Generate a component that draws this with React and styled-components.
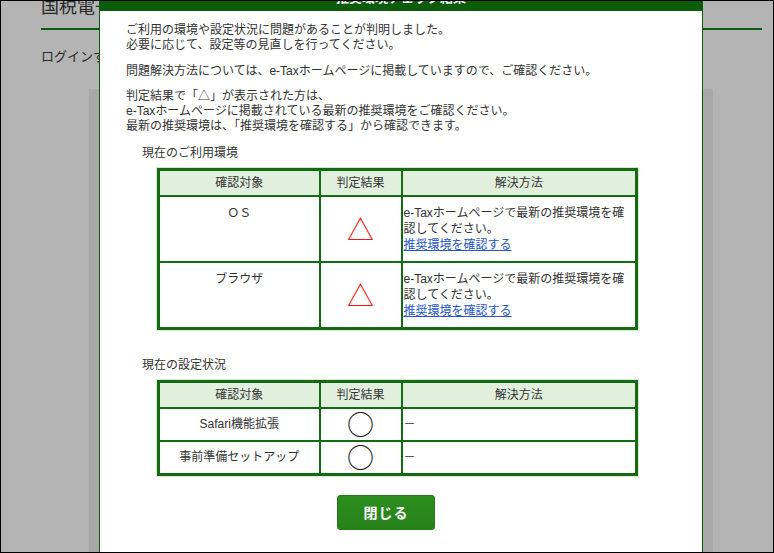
import React from "react";
import styled, { createGlobalStyle } from "styled-components";

const GREEN = "#0b5d0b";
const LINE = "#146b14";

const GlobalStyle = createGlobalStyle`
  body {
    margin: 0;
    font-family: "Liberation Sans", "Noto Sans CJK JP", sans-serif;
    color: #333;
  }
`;

const Frame = styled.div`
  position: relative;
  width: 774px;
  height: 553px;
  box-sizing: border-box;
  border: 1px solid #000;
  overflow: hidden;
  background: #fff;
`;

const Page = styled.div`
  padding-left: 40px;
`;

const SiteTitle = styled.h1`
  margin: -6px 0 0;
  font-size: 18px;
  line-height: 24px;
  font-weight: normal;
  color: #3a3a3a;
  white-space: nowrap;
`;

const TitleRule = styled.div`
  width: 721px;
  height: 2px;
  margin-top: 9px;
  background: #118311;
`;

const LoginText = styled.p`
  margin: 18px 0 0;
  font-size: 13px;
  line-height: 18px;
  color: #3a3a3a;
`;

const ContentBox = styled.div`
  margin: 23px 0 0 48px;
  width: 624px;
  height: 500px;
  background: #efefef;
`;

const Overlay = styled.div`
  position: absolute;
  inset: 0;
  background: rgba(0, 0, 0, 0.294);
`;

const Modal = styled.div`
  position: absolute;
  left: 98px;
  top: -16px;
  width: 604px;
  height: 600px;
  box-sizing: border-box;
  background: #fff;
  border: 1px solid ${GREEN};
  border-top: none;
`;

const ModalHeader = styled.div`
  height: 26px;
  background: ${GREEN};
  color: #fff;
  font-size: 13px;
  font-weight: bold;
  line-height: 26px;
  text-align: center;
`;

const ModalBody = styled.div`
  padding: 12px 26px 0;
  font-size: 12px;
`;

const Para = styled.p`
  margin: 0 0 10.5px;
  line-height: 15px;
`;

const Section = styled.section`
  margin-top: ${(p) => p.$gap}px;
`;

const SectionTitle = styled.div`
  margin: 0 0 7px 16px;
  line-height: 16px;
`;

const Table = styled.table`
  margin-left: 31px;
  width: 478px;
  table-layout: fixed;
  border-collapse: collapse;
  border: 3px solid ${LINE};
  box-shadow: 0 0 0 1px #d6ead2;
  font-size: 12px;
  line-height: 16px;
`;

const Th = styled.th`
  padding: 4px 0;
  background: #e1f0dd;
  border: 2px solid ${LINE};
  font-weight: normal;
  text-align: center;
`;

const Td = styled.td`
  padding: ${(p) => (p.$tall ? "8px" : "7.5px")} 0;
  padding-left: ${(p) => (p.$left ? "1px" : "0")};
  padding-right: ${(p) => (p.$left ? "6px" : "0")};
  border: 2px solid ${LINE};
  text-align: ${(p) => (p.$left ? "left" : "center")};
  vertical-align: ${(p) => (p.$middle ? "middle" : "top")};
`;

const MarkCell = styled.td`
  padding: 0;
  border: 2px solid ${LINE};
  vertical-align: middle;
`;

const Mark = styled.span`
  display: block;
  height: 28px;
  font-family: "Noto Sans CJK JP", sans-serif;
  font-size: ${(p) => (p.$warn ? "27px" : "27px")};
  line-height: 28px;
  text-align: center;
  color: ${(p) => (p.$warn ? "#ff1414" : "#111")};
`;

const Link = styled.a`
  color: #2556c9;
  text-decoration: underline;
`;

const ButtonRow = styled.div`
  margin: 19px 0 0 211px;
`;

const CloseButton = styled.button`
  width: 98px;
  height: 35px;
  border: 1px solid #237a16;
  border-radius: 3px;
  background: linear-gradient(#2d8d1d, #26821a);
  color: #fff;
  font-family: "Liberation Sans", "Noto Sans CJK JP", sans-serif;
  font-size: 14px;
  font-weight: bold;
  letter-spacing: 1px;
`;

const envRows = [
  { name: "ＯＳ" },
  { name: "ブラウザ" },
];

const settingRows = ["Safari機能拡張", "事前準備セットアップ"];

function Cols() {
  return (
    <colgroup>
      <col style={{ width: 161 }} />
      <col style={{ width: 82 }} />
      <col style={{ width: 235 }} />
    </colgroup>
  );
}

function HeadRow() {
  return (
    <thead>
      <tr>
        <Th>確認対象</Th>
        <Th>判定結果</Th>
        <Th>解決方法</Th>
      </tr>
    </thead>
  );
}

export default function App() {
  return (
    <>
      <GlobalStyle />
      <Frame>
        <Page>
          <SiteTitle>国税電子申告・納税システム（e-Tax）</SiteTitle>
          <TitleRule />
          <LoginText>ログインする方法を選択してください。</LoginText>
          <ContentBox />
        </Page>
        <Overlay />
        <Modal>
          <ModalHeader>推奨環境チェック結果</ModalHeader>
          <ModalBody>
            <Para>
              ご利用の環境や設定状況に問題があることが判明しました。
              <br />
              必要に応じて、設定等の見直しを行ってください。
            </Para>
            <Para>
              問題解決方法については、e-Taxホームページに掲載していますので、ご確認ください。
            </Para>
            <Para>
              判定結果で「△」が表示された方は、
              <br />
              e-Taxホームページに掲載されている最新の推奨環境をご確認ください。
              <br />
              最新の推奨環境は、「推奨環境を確認する」から確認できます。
            </Para>

            <Section $gap={2.5}>
              <SectionTitle>現在のご利用環境</SectionTitle>
              <Table>
                <Cols />
                <HeadRow />
                <tbody>
                  {envRows.map((row) => (
                    <tr key={row.name}>
                      <Td $tall>{row.name}</Td>
                      <MarkCell>
                        <Mark $warn>△</Mark>
                      </MarkCell>
                      <Td $tall $left>
                        e-Taxホームページで最新の推奨環境を確認してください。
                        <br />
                        <Link href="#">推奨環境を確認する</Link>
                      </Td>
                    </tr>
                  ))}
                </tbody>
              </Table>
            </Section>

            <Section $gap={27}>
              <SectionTitle>現在の設定状況</SectionTitle>
              <Table>
                <Cols />
                <HeadRow />
                <tbody>
                  {settingRows.map((name) => (
                    <tr key={name}>
                      <Td $middle>{name}</Td>
                      <MarkCell>
                        <Mark>○</Mark>
                      </MarkCell>
                      <Td $left $middle>－</Td>
                    </tr>
                  ))}
                </tbody>
              </Table>
            </Section>

            <ButtonRow>
              <CloseButton type="button">閉じる</CloseButton>
            </ButtonRow>
          </ModalBody>
        </Modal>
      </Frame>
    </>
  );
}
